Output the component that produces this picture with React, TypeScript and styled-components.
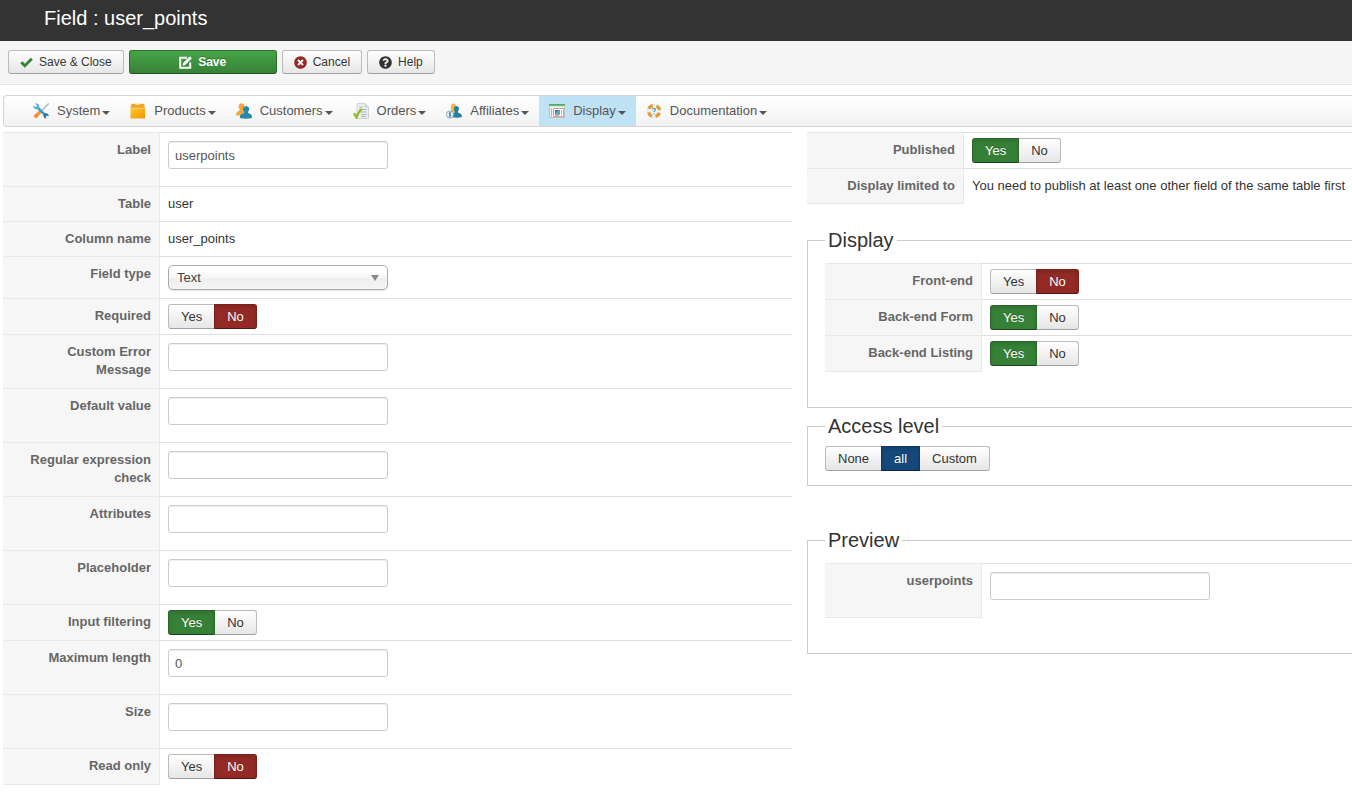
import React, { ReactNode, useState } from "react";
import styled, { createGlobalStyle, css } from "styled-components";
import { FaQuestionCircle, FaTimesCircle } from "react-icons/fa";

const GlobalStyle = createGlobalStyle`
  *, *::before, *::after { box-sizing: border-box; }
  body {
    margin: 0;
    background: #fff;
    color: #333;
    font: 13px/18px "Liberation Sans", Arial, Helvetica, sans-serif;
    overflow-x: hidden;
  }
  button, input, select { font: inherit; }
`;

const Header = styled.header`
  background: #333;
  height: 41px;
  padding: 0 44px;
`;

const Title = styled.h1`
  margin: 0;
  color: #fff;
  font-size: 20px;
  line-height: 36px;
  font-weight: normal;
`;

const Toolbar = styled.div`
  display: flex;
  gap: 5px;
  padding: 9px 8px 10px;
  background: #f5f5f5;
  border-bottom: 1px solid #e3e3e3;
`;

const ToolButton = styled.button<{ $primary?: boolean }>`
  display: inline-flex;
  align-items: center;
  justify-content: center;
  gap: 6px;
  height: 24px;
  padding: 0 11px;
  border: 1px solid #bbb;
  border-bottom-color: #a2a2a2;
  border-radius: 3px;
  background: linear-gradient(#fff, #e6e6e6);
  color: #333;
  font-size: 12px;
  line-height: 18px;
  text-shadow: 0 1px 1px rgba(255, 255, 255, 0.75);
  cursor: pointer;

  ${(p) =>
    p.$primary &&
    css`
      width: 148px;
      color: #fff;
      font-weight: bold;
      border-color: #2d6d2d #2d6d2d #1f541f;
      background: linear-gradient(#46a546, #378137);
      text-shadow: 0 -1px 0 rgba(0, 0, 0, 0.25);
    `}
`;

const Menu = styled.nav`
  display: flex;
  height: 32px;
  margin: 10px 0 5px 3px;
  padding-left: 19px;
  border: 1px solid #d4d4d4;
  border-right: 0;
  border-radius: 4px 0 0 4px;
  background: linear-gradient(#fff, #f2f2f2);
`;

const MenuLink = styled.a<{ $active?: boolean }>`
  display: flex;
  align-items: center;
  gap: 8px;
  padding: 0 10px;
  color: #555;
  text-decoration: none;
  white-space: nowrap;
  background: ${(p) => (p.$active ? "#c0e2f5" : "transparent")};
`;

const MenuText = styled.span`
  display: flex;
  align-items: center;
  gap: 2px;
`;

const Caret = styled.span`
  margin-top: 3px;
  border: 4px solid transparent;
  border-top-color: #555;
  border-bottom: 0;
`;

const Columns = styled.main`
  display: grid;
  grid-template-columns: minmax(0, 789fr) minmax(0, 545fr);
  gap: 15px;
  margin-left: 3px;
  align-items: start;
`;

const FormTable = styled.table`
  width: 100%;
  table-layout: fixed;
  border-collapse: separate;
  border-spacing: 0;
`;

const LabelCell = styled.th`
  width: 157px;
  padding: 8px;
  border-top: 1px solid #e9e9e9;
  border-right: 1px solid #e9e9e9;
  background: #f6f6f6;
  color: #666;
  font-weight: bold;
  text-align: right;
  vertical-align: top;

  tr:last-child > & {
    border-bottom: 1px solid #e9e9e9;
  }
`;

const ValueCell = styled.td<{ $tight?: boolean }>`
  padding: ${(p) => (p.$tight ? "5px 8px" : "8px")};
  border-top: 1px solid #ddd;
  vertical-align: top;
  white-space: nowrap;

  tr:last-child > & {
    border-bottom: 1px solid transparent;
  }
`;

const TextInput = styled.input`
  display: block;
  width: 220px;
  height: 28px;
  margin-bottom: 9px;
  padding: 4px 6px;
  border: 1px solid #ccc;
  border-radius: 3px;
  background: #fff;
  color: #555;
  box-shadow: inset 0 1px 1px rgba(0, 0, 0, 0.075);
`;

const SelectWrap = styled.div`
  position: relative;
  width: 220px;
`;

const Select = styled.select`
  display: block;
  appearance: none;
  width: 100%;
  height: 25px;
  padding: 0 8px;
  border: 1px solid #aaa;
  border-radius: 5px;
  background: linear-gradient(#fff 20%, #f6f6f6 50%, #eee 52%, #f4f4f4 100%);
  box-shadow: 0 1px 1px rgba(0, 0, 0, 0.1);
  color: #444;
`;

const SelectArrow = styled.span`
  position: absolute;
  top: 10px;
  right: 9px;
  border: 4px solid transparent;
  border-top: 6px solid #888;
  border-bottom: 0;
  pointer-events: none;
`;

const Group = styled.div`
  display: flex;
  height: 25px;
`;

type Tone = "green" | "red" | "blue";

const tones: Record<Tone, string> = {
  green: "background: #378137; border-color: #2b662b #2b662b #1c461c;",
  red: "background: #942a25; border-color: #7c201c #7c201c #561512;",
  blue: "background: #15497c; border-color: #103a63 #103a63 #0a2744;",
};

const Choice = styled.label<{ $tone?: Tone }>`
  position: relative;
  padding: 3px 12px 2px;
  border: 1px solid #bbb;
  border-bottom-color: #a2a2a2;
  background: linear-gradient(#fff, #e6e6e6);
  cursor: pointer;

  & + & {
    margin-left: -1px;
  }
  &:first-child {
    border-radius: 3px 0 0 3px;
  }
  &:last-child {
    border-radius: 0 3px 3px 0;
  }
  ${(p) =>
    p.$tone &&
    css`
      z-index: 1;
      color: #fff;
      ${tones[p.$tone]}
      box-shadow: inset 0 2px 4px rgba(0, 0, 0, 0.15);
      text-shadow: 0 -1px 0 rgba(0, 0, 0, 0.25);
    `}
`;

const HiddenRadio = styled.input`
  position: absolute;
  opacity: 0;
  width: 1px;
  height: 1px;
  margin: 0;
`;

const Panel = styled.fieldset<{ $spaced?: boolean; $compact?: boolean }>`
  min-width: 0;
  margin: ${(p) => (p.$spaced ? "36px" : "0")} 0 0;
  padding: ${(p) => (p.$compact ? "2px 0 14px 17px" : "5px 0 35px 17px")};
  border: 1px solid #ccc;
  border-right: 0;
`;

const Legend = styled.legend`
  padding: 0 3px;
  color: #333;
  font-size: 20px;
  line-height: 36px;
`;

const PublishBox = styled.div`
  margin-bottom: 18px;
`;

/* Icons */

const Svg = ({ children }: { children: ReactNode }) => (
  <svg width="16" height="16" viewBox="0 0 16 16" aria-hidden="true">
    {children}
  </svg>
);

const CheckIcon = () => (
  <svg width="13" height="13" viewBox="0 0 13 13" aria-hidden="true">
    <path d="M1.300 6.200l3.500 3.500 7-6.900" fill="none" stroke="#378137" strokeWidth="2.900" />
  </svg>
);

const EditIcon = () => (
  <svg width="13" height="13" viewBox="0 0 13 13" aria-hidden="true">
    <path d="M8 1.800H1.200v10h10V6.500" fill="none" stroke="#fff" strokeWidth="2" />
    <path d="M3.500 9.600l.6-2.700L10.300.7a.8.800 0 0 1 1.100 0l1 1a.8.800 0 0 1 0 1.100L6.200 9z" fill="#fff" />
  </svg>
);

const ToolsIcon = () => (
  <Svg>
    <path d="M15.300.9L9 7.200" stroke="#b4bcc2" strokeWidth="1.500" strokeLinecap="round" />
    <path d="M6.300 7.500l2.200 2.200-4.700 5.200c-1 1-3.900-1.400-2.700-2.700z" fill="#f0973c" />
    <path d="M2.200 12l1.800 1.800" stroke="#d87820" strokeWidth=".8" />
    <path d="M3.600 3.600l9.300 9.300" stroke="#3d9cc4" strokeWidth="2.600" />
    <path d="M2.200.4l2 2-.5 1.300-1.300.5-2-2C.1 4 .9 5.900 3 6.200 5.300 6.500 6.600 5 6.200 2.900 5.800.9 4.100.1 2.200.4z" fill="#4fb0d2" />
    <path d="M10.500 12.800c0-1.500 1-2.600 2.600-2.500 1.700.1 2.900 1.600 2.600 3.200l-1.700-1-1.300 1 .7 1.900c-1.600.2-2.900-1-2.900-2.600z" fill="#23789f" />
  </Svg>
);

const BoxIcon = () => (
  <Svg>
    <defs>
      <linearGradient id="box" x1="0" y1="0" x2="1" y2="1">
        <stop offset="0" stopColor="#ffc62e" />
        <stop offset="1" stopColor="#f39400" />
      </linearGradient>
    </defs>
    <path d="M1.500.8h12.500L15 5H.5z" fill="#f0a526" />
    <path d="M5.500.8h4V2h-4z" fill="#ffe6a8" />
    <path d="M.5 5H15v10.500H.5z" fill="url(#box)" />
    <path d="M.5 5.300H15" stroke="#ffe08a" strokeWidth=".8" />
  </Svg>
);

const UsersIcon = () => (
  <Svg>
    <path d="M0 11.500C0 9 2 8.600 3.500 7.500V6C2.800 5 2.500 4 2.700 2.800 3 1.100 4.100.2 5.600.2S8.300 1.100 8.500 2.800c.2 1.400-.2 2.400-.9 3.200v3L6 12.500H.5z" fill="#f2a93b" />
    <path d="M3.900 15c-.3-3.500 1.200-4 4-5.100V8.700C7.100 7.800 6.800 6.800 7 5.600c.2-1.700 1.400-2.700 3-2.700s2.900 1 3.100 2.700c.2 1.200-.2 2.300-1 3.100v1.200c2.800 1.100 4 1.600 3.900 5.100-3.500 1-8.600 1-12.100 0z" fill="#2787a8" />
    <path d="M8.200 5c.4-1 1-1.300 1.800-1.300" stroke="#6fbdd3" fill="none" />
  </Svg>
);

const OrdersIcon = () => (
  <Svg>
    <path d="M4 .5h8L15.500 4v11.500H4z" fill="#eceeef" stroke="#ced3d7" />
    <path d="M12 .5V4h3.500" fill="#d4dade" stroke="#bcc4c9" strokeWidth=".8" />
    <path d="M6 4h4M6 6.500h7.500M6 9h7.500M8 11.500h5.500M8 13.500h5" stroke="#adb5ba" />
    <path d="M1 10.200l2.400 4.200C4.500 10.800 6 8.300 8.800 5.900" fill="none" stroke="#8fbd25" strokeWidth="2.300" />
  </Svg>
);

const AffiliatesIcon = () => (
  <Svg>
    <path d="M5 9V5C4.400 2 5.700.4 7.500.4S10.400 2 10 4.500V10z" fill="#f2b83f" />
    <path d="M6 14.300V11c1-.7 2-1 2.800-1.500V8.300C8 7.400 7.900 6.500 8 5.200c.2-1.500 1.100-2.300 2.400-2.300s2.400.8 2.500 2.300c.1 1.300-.2 2.300-.9 3.100v1.400c2.500.8 4 1.400 4 4.300-3 .8-7 .8-10 .3z" fill="#2380a1" />
    <circle cx="4" cy="11.500" r="3.600" fill="#eef4f8" stroke="#7ea0b8" strokeWidth=".9" />
    <path d="M5.200 10c-1.800-.8-3 .9-1.200 1.500 1.700.5.700 2.200-1.200 1.500M4 8.800v5.400" fill="none" stroke="#3b6e91" strokeWidth=".9" />
  </Svg>
);

const DisplayIcon = () => (
  <Svg>
    <path d="M.5 1.500h15v13H.5z" fill="#f0f1f1" stroke="#bcbfc0" />
    <path d="M0 1h16v1.800H0z" fill="#50ae5d" />
    <path d="M0 3h16v1H0z" fill="#d7ead9" />
    <path d="M4.500 5.500h10v8h-10z" fill="#fff" stroke="#dc9a96" />
    <path d="M6 7h5v4.500H6z" fill="#267fa6" />
    <path d="M7.500 8.500L11 7v4.500H6z" fill="#58a8b9" />
    <path d="M12.500 7v5M2.500 5.500v8M6 12.500h4" stroke="#b1b6b8" />
  </Svg>
);

const HelpRingIcon = () => (
  <Svg>
    <circle cx="8" cy="8" r="5.600" fill="none" stroke="#e9eef0" strokeWidth="3.200" />
    <circle cx="8" cy="8" r="5.600" fill="none" stroke="#e49b35" strokeWidth="3.400" strokeDasharray="5 3.796" strokeDashoffset="-1.900" />
    <path d="M6.500 6.800c.1-1.900 3.200-1.800 3 0C9.400 7.900 8.100 7.800 8 9M8 10v1.300" fill="none" stroke="#4a9cb9" strokeWidth="1.200" />
  </Svg>
);

const menuItems: { text: string; icon: ReactNode; active?: boolean }[] = [
  { text: "System", icon: <ToolsIcon /> },
  { text: "Products", icon: <BoxIcon /> },
  { text: "Customers", icon: <UsersIcon /> },
  { text: "Orders", icon: <OrdersIcon /> },
  { text: "Affiliates", icon: <AffiliatesIcon /> },
  { text: "Display", icon: <DisplayIcon />, active: true },
  { text: "Documentation", icon: <HelpRingIcon /> },
];

type ChoiceGroupProps = {
  name: string;
  label: string;
  options: string[];
  initial: string;
};

const toneOf = (option: string): Tone =>
  option === "Yes" ? "green" : option === "No" ? "red" : "blue";

const ChoiceGroup = ({ name, label, options, initial }: ChoiceGroupProps) => {
  const [value, setValue] = useState(initial);
  return (
    <Group role="radiogroup" aria-label={label}>
      {options.map((option) => (
        <Choice key={option} $tone={option === value ? toneOf(option) : undefined}>
          <HiddenRadio
            type="radio"
            name={name}
            checked={option === value}
            onChange={() => setValue(option)}
          />
          {option}
        </Choice>
      ))}
    </Group>
  );
};

const TextRow = ({ id, label, value = "" }: { id: string; label: string; value?: string }) => (
  <tr>
    <LabelCell scope="row">
      <label htmlFor={id}>{label}</label>
    </LabelCell>
    <ValueCell>
      <TextInput id={id} type="text" defaultValue={value} />
    </ValueCell>
  </tr>
);

const StaticRow = ({ label, children }: { label: string; children: ReactNode }) => (
  <tr>
    <LabelCell scope="row">{label}</LabelCell>
    <ValueCell>{children}</ValueCell>
  </tr>
);

const YesNoRow = ({ name, label, yes = false }: { name: string; label: string; yes?: boolean }) => (
  <tr>
    <LabelCell scope="row">{label}</LabelCell>
    <ValueCell $tight>
      <ChoiceGroup name={name} label={label} options={["Yes", "No"]} initial={yes ? "Yes" : "No"} />
    </ValueCell>
  </tr>
);

export default function App() {
  return (
    <>
      <GlobalStyle />
      <Header>
        <Title>Field : user_points</Title>
      </Header>
      <Toolbar>
        <ToolButton type="button">
          <CheckIcon />
          Save &amp; Close
        </ToolButton>
        <ToolButton type="button" $primary>
          <EditIcon />
          Save
        </ToolButton>
        <ToolButton type="button">
          <FaTimesCircle size={13} color="#942a25" />
          Cancel
        </ToolButton>
        <ToolButton type="button">
          <FaQuestionCircle size={13} color="#333" />
          Help
        </ToolButton>
      </Toolbar>
      <Menu>
        {menuItems.map((item) => (
          <MenuLink key={item.text} href="#" $active={item.active}>
            {item.icon}
            <MenuText>
              {item.text}
              <Caret />
            </MenuText>
          </MenuLink>
        ))}
      </Menu>
      <Columns>
        <FormTable>
          <tbody>
            <TextRow id="label" label="Label" value="userpoints" />
            <StaticRow label="Table">user</StaticRow>
            <StaticRow label="Column name">user_points</StaticRow>
            <tr>
              <LabelCell scope="row">
                <label htmlFor="type">Field type</label>
              </LabelCell>
              <ValueCell>
                <SelectWrap>
                  <Select id="type" defaultValue="Text">
                    <option>Text</option>
                  </Select>
                  <SelectArrow />
                </SelectWrap>
              </ValueCell>
            </tr>
            <YesNoRow name="required" label="Required" />
            <TextRow id="error" label="Custom Error Message" />
            <TextRow id="default" label="Default value" />
            <TextRow id="regex" label="Regular expression check" />
            <TextRow id="attributes" label="Attributes" />
            <TextRow id="placeholder" label="Placeholder" />
            <YesNoRow name="filtering" label="Input filtering" yes />
            <TextRow id="maxlength" label="Maximum length" value="0" />
            <TextRow id="size" label="Size" />
            <YesNoRow name="readonly" label="Read only" />
          </tbody>
        </FormTable>
        <div>
          <PublishBox>
            <FormTable>
              <tbody>
                <YesNoRow name="published" label="Published" yes />
                <StaticRow label="Display limited to">
                  You need to publish at least one other field of the same table first
                </StaticRow>
              </tbody>
            </FormTable>
          </PublishBox>
          <Panel>
            <Legend>Display</Legend>
            <FormTable>
              <tbody>
                <YesNoRow name="frontend" label="Front-end" />
                <YesNoRow name="backendForm" label="Back-end Form" yes />
                <YesNoRow name="backendListing" label="Back-end Listing" yes />
              </tbody>
            </FormTable>
          </Panel>
          <Panel $compact>
            <Legend>Access level</Legend>
            <ChoiceGroup
              name="access"
              label="Access level"
              options={["None", "all", "Custom"]}
              initial="all"
            />
          </Panel>
          <Panel $spaced>
            <Legend>Preview</Legend>
            <FormTable>
              <tbody>
                <TextRow id="preview" label="userpoints" />
              </tbody>
            </FormTable>
          </Panel>
        </div>
      </Columns>
    </>
  );
}
